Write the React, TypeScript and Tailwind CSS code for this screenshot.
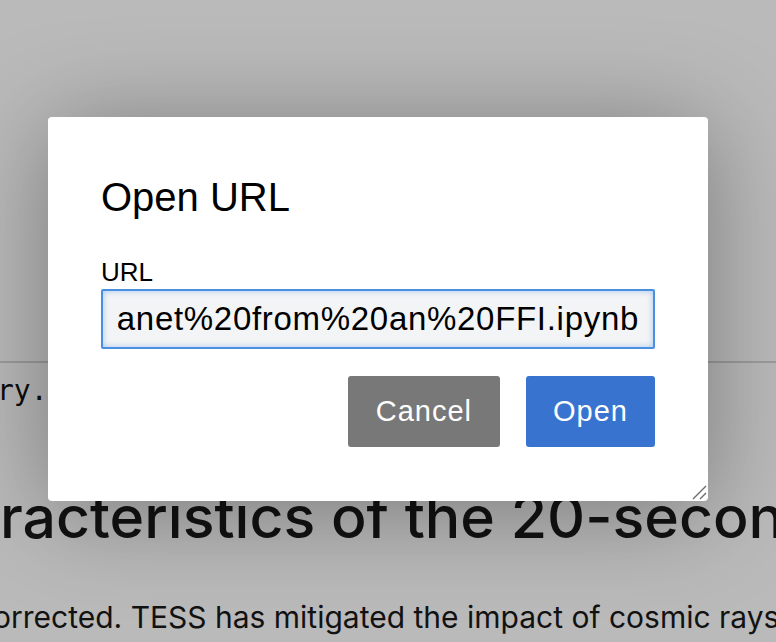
export default function App() {
  return (
    <div className="relative h-[642px] w-[776px] overflow-hidden bg-white text-[#1a1a1a]">
      {/* notebook page behind the modal */}
      <div className="h-[361px]" />
      <div className="border-t-[2px] border-[#d6d6d6]">
        <p className="-ml-[3px] pt-[10px] font-['DejaVu_Sans_Mono',monospace] text-[28px] leading-[36px] text-[#111]">ry.</p>
        <h1 className="mt-[73px] whitespace-nowrap font-['Inter',sans-serif] text-[59px] font-medium leading-[70px]">
          racteristics of the 20-second cadence data
        </h1>
        <p className="-ml-[7px] mt-[45px] whitespace-nowrap font-['Inter',sans-serif] text-[30px] leading-[40px]">
          orrected. TESS has mitigated the impact of cosmic rays in the data
        </p>
      </div>

      {/* modal overlay */}
      <div className="absolute inset-0 bg-black/[0.27] pt-[117px] pl-[48px] font-['Liberation_Sans',Arial,sans-serif]">
        <div className="relative w-[660px] rounded-[4px] bg-white px-[53px] pt-[57px] pb-[54px] shadow-[0_10px_100px_rgba(0,0,0,0.35)]">
          <h2 className="text-[40px] leading-[46px] text-black">Open URL</h2>
          <label className="mt-[37px] block text-[26px] leading-[30px] text-black">URL</label>
          <div className="mt-[2px] h-[60px] rounded-[2px] border-2 border-[#4a90e2] bg-[#f3f4f5] px-[14px] shadow-[inset_0_0_6px_rgba(74,144,226,0.45)]">
            <div className="flex h-full items-center justify-end overflow-hidden">
              <span className="whitespace-nowrap text-[33px] tracking-[0.7px] text-black">
                https://raw.githubusercontent.com/notebooks/Identifying%20a%20planet%20from%20an%20FFI.ipynb
              </span>
            </div>
          </div>
          <div className="mt-[27px] flex justify-end gap-[26px]">
            <button className="h-[71px] rounded-[3px] bg-[#787878] px-[28px] text-[29px] tracking-[1px] text-white">
              Cancel
            </button>
            <button className="h-[71px] rounded-[3px] bg-[#3874cf] px-[27px] text-[29px] tracking-[1px] text-white">
              Open
            </button>
          </div>
          <svg className="absolute right-[1px] bottom-[1px]" width="16" height="16" viewBox="0 0 16 16">
            <path d="M15 2 L2 15 M15 9 L9 15" stroke="#6b6b6b" strokeWidth="1.4" fill="none" />
          </svg>
        </div>
      </div>
    </div>
  );
}
